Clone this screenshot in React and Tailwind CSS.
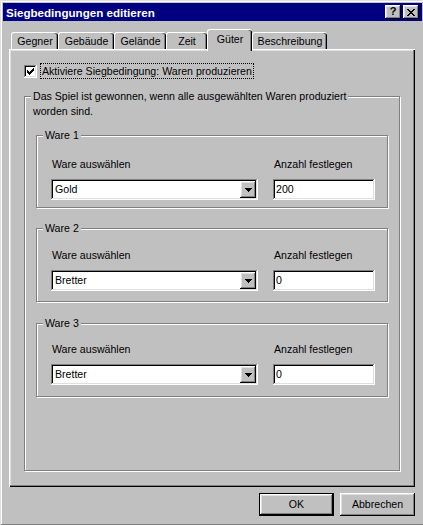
import React from 'react';

const raised = 'shadow-[inset_-1px_-1px_0_#000,inset_1px_1px_0_#fff,inset_-2px_-2px_0_#808080,inset_2px_2px_0_#dfdfdf]';
const sunken = 'shadow-[inset_-1px_-1px_0_#fff,inset_1px_1px_0_#808080,inset_-2px_-2px_0_#dfdfdf,inset_2px_2px_0_#000]';
const etched = 'border border-[#808080] shadow-[inset_1px_1px_0_#fff,1px_1px_0_#fff]';

const tabs = [
  { label: 'Gegner', w: 'w-[47px]' },
  { label: 'Gebäude', w: 'w-[56px]' },
  { label: 'Gelände', w: 'w-[52px]' },
  { label: 'Zeit', w: 'w-[41px]' },
  { label: 'Güter', w: 'w-[45px]', active: true },
  { label: 'Beschreibung', w: 'w-[75px]' },
];

const wares = [
  { n: 1, item: 'Gold', qty: '200', h: 'h-[73px]', mt: 'mt-[17px]', lt: 'mt-[16px]' },
  { n: 2, item: 'Bretter', qty: '0', h: 'h-[74px]', mt: 'mt-[20px]', lt: 'mt-[14px]' },
  { n: 3, item: 'Bretter', qty: '0', h: 'h-[74px]', mt: 'mt-[21px]', lt: 'mt-[13px]' },
];

function CloseGlyph() {
  return (
    <svg width="8" height="7" viewBox="0 0 8 7" shapeRendering="crispEdges">
      <path
        fill="#000"
        d="M0 0h2v1H0zM6 0h2v1H6zM1 1h2v1H1zM5 1h2v1H5zM2 2h4v1H2zM3 3h2v1H3zM2 4h4v1H2zM1 5h2v1H1zM5 5h2v1H5zM0 6h2v1H0zM6 6h2v1H6z"
      />
    </svg>
  );
}

function ArrowGlyph() {
  return (
    <svg width="7" height="4" viewBox="0 0 7 4" shapeRendering="crispEdges">
      <path fill="#000" d="M0 0h7v1H0zM1 1h5v1H1zM2 2h3v1H2zM3 3h1v1H3z" />
    </svg>
  );
}

function CheckGlyph() {
  return (
    <svg width="7" height="7" viewBox="0 0 7 7" shapeRendering="crispEdges">
      <path fill="#000" d="M0 2h1v3H0zM1 3h1v3H1zM2 4h1v3H2zM3 3h1v3H3zM4 2h1v3H4zM5 1h1v3H5zM6 0h1v3H6z" />
    </svg>
  );
}

function Tab({ label, w, active }) {
  return (
    <div
      className={`${w} flex items-center justify-center border-t border-l border-t-white border-l-white rounded-tl-[3px] rounded-tr-[3px] shadow-[inset_-1px_0_0_#000,inset_-2px_0_0_#808080] bg-[#c0c0c0] ${
        active ? 'h-[22px] -mb-[2px] pb-[3px] relative z-10' : 'h-[17px]'
      }`}
    >
      {label}
    </div>
  );
}

function Combo({ value }) {
  return (
    <div className={`mt-[8px] h-[21px] w-[207px] bg-white ${sunken} flex items-center pl-[4px] pr-[2px]`}>
      <span className="flex-1">{value}</span>
      <div className={`w-[16px] h-[17px] bg-[#c0c0c0] ${raised} flex items-center justify-center`}>
        <ArrowGlyph />
      </div>
    </div>
  );
}

function WareGroup({ n, item, qty, h, mt, lt }) {
  return (
    <div className={`${etched} ${h} ${mt} ml-[11px] w-[352px]`}>
      <div className="-mt-[7px] ml-[6px] px-[2px] w-fit bg-[#c0c0c0]">Ware {n}</div>
      <div className={`flex ml-[14px] ${lt}`}>
        <div className="w-[207px]">
          <div className="pl-[1px]">Ware auswählen</div>
          <Combo value={item} />
        </div>
        <div className="ml-[15px] w-[102px]">
          <div className="pl-[1px]">Anzahl festlegen</div>
          <div className={`mt-[8px] h-[21px] w-[102px] bg-white ${sunken} flex items-center pl-[3px]`}>{qty}</div>
        </div>
      </div>
    </div>
  );
}

export default function App() {
  return (
    <div className="w-[423px] h-[525px] overflow-hidden bg-[#c0c0c0] font-['Liberation_Sans',Arial,sans-serif] text-[10.6px] leading-[13px] text-black">
      <div className="w-[425px] h-[526px] p-[3px] bg-[#c0c0c0] shadow-[inset_-1px_-1px_0_#000,inset_1px_1px_0_#dfdfdf,inset_-2px_-2px_0_#808080,inset_2px_2px_0_#fff] flex flex-col">
        {/* title bar */}
        <div className="h-[18px] bg-[#000080] flex items-center pl-[3px] pr-[3px]">
          <span className="flex-1 text-white font-bold text-[11.6px]">Siegbedingungen editieren</span>
          <div className={`w-[16px] h-[14px] bg-[#c0c0c0] ${raised} flex items-center justify-center font-bold text-[11px] leading-[11px] pb-[1px]`}>?</div>
          <div className={`ml-[2px] w-[16px] h-[14px] bg-[#c0c0c0] ${raised} flex items-center justify-center`}>
            <CloseGlyph />
          </div>
        </div>

        <div className="ml-[6px] mr-[7px]">
          {/* tabs */}
          <div className="mt-[8px] h-[20px] pl-[2px] flex items-end">
            {tabs.map((t) => (
              <Tab key={t.label} {...t} />
            ))}
          </div>

          {/* panel */}
          <div className="w-[406px] h-[438px] bg-[#c0c0c0] shadow-[inset_1px_1px_0_#fff,inset_-1px_-1px_0_#000,inset_-2px_-2px_0_#808080,inset_2px_2px_0_#dfdfdf] pt-[14px] pl-[15px]">
            <div className="flex items-center h-[16px]">
              <div className={`w-[13px] h-[13px] bg-white ${sunken} flex items-center justify-center`}>
                <CheckGlyph />
              </div>
              <span className="ml-[3px] h-[16px] border border-dotted border-black px-[1px] flex items-center">
                Aktiviere Siegbedingung: Waren produzieren
              </span>
            </div>

            <div className={`${etched} mt-[17px] w-[376px] h-[375px]`}>
              <div className="-mt-[7px] ml-[6px] px-[2px] w-fit bg-[#c0c0c0]">
                Das Spiel ist gewonnen, wenn alle ausgewählten Waren produziert
              </div>
              <div className="mt-[2px] ml-[8px]">worden sind.</div>
              {wares.map((w) => (
                <WareGroup key={w.n} {...w} />
              ))}
            </div>
          </div>

          {/* buttons */}
          <div className="mt-[6px] flex justify-end gap-[6px]">
            <div className="w-[75px] h-[23px] border border-black">
              <div className={`w-full h-full ${raised} flex items-center justify-center`}>OK</div>
            </div>
            <div className={`w-[75px] h-[23px] ${raised} flex items-center justify-center`}>Abbrechen</div>
          </div>
        </div>
      </div>
    </div>
  );
}
